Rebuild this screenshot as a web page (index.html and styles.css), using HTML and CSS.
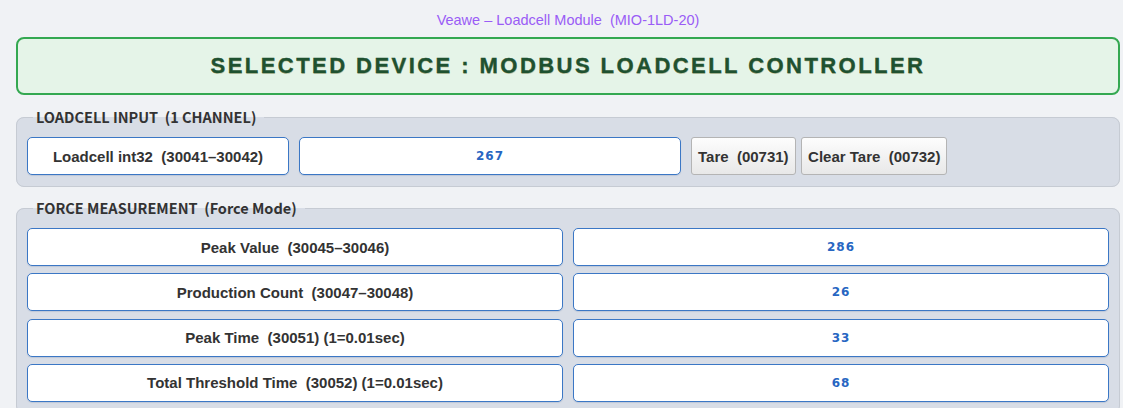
FILE: index.html
```html
<!DOCTYPE html>
<html lang="en">
<head>
<meta charset="utf-8">
<title>Veawe – Loadcell Module</title>
<link rel="stylesheet" href="styles.css">
</head>
<body>
<div class="page">
  <div class="subtitle">Veawe – Loadcell Module&nbsp; (MIO-1LD-20)</div>
  <div class="device">SELECTED DEVICE : MODBUS LOADCELL CONTROLLER</div>

  <fieldset class="group">
    <legend class="group-title">LOADCELL INPUT&nbsp; (1 CHANNEL)</legend>
    <div class="input-row">
      <div class="label-box lc-label">Loadcell int32&nbsp; (30041–30042)</div>
      <div class="value-box lc-value">267</div>
      <button class="btn">Tare&nbsp; (00731)</button>
      <button class="btn">Clear Tare&nbsp; (00732)</button>
    </div>
  </fieldset>

  <fieldset class="group">
    <legend class="group-title">FORCE MEASUREMENT&nbsp; (Force Mode)</legend>
    <div class="grid">
      <div class="label-box">Peak Value&nbsp; (30045–30046)</div>
      <div class="value-box">286</div>
      <div class="label-box">Production Count&nbsp; (30047–30048)</div>
      <div class="value-box">26</div>
      <div class="label-box">Peak Time&nbsp; (30051) (1=0.01sec)</div>
      <div class="value-box">33</div>
      <div class="label-box">Total Threshold Time&nbsp; (30052) (1=0.01sec)</div>
      <div class="value-box">68</div>
    </div>
  </fieldset>
</div>
</body>
</html>
```

FILE: styles.css
```css
html, body {
  margin: 0;
  padding: 0;
  background: #f0f2f5;
  font-family: "Liberation Sans", Arial, sans-serif;
  color: #333;
}

.page {
  width: 1104px;
  margin-left: 16px;
  padding-top: 12px;
}

.subtitle {
  text-align: center;
  font-size: 14.5px;
  line-height: 16px;
  color: #9a5cf6;
  margin-bottom: 9px;
}

.device {
  box-sizing: border-box;
  height: 58px;
  border: 2px solid #34a851;
  border-radius: 8px;
  background: #e5f4e8;
  text-align: center;
  font-size: 22px;
  line-height: 54px;
  font-weight: bold;
  letter-spacing: 2.45px;
  color: #1f5130;
  -webkit-text-stroke: 0.35px #1f5130;
  text-shadow: 0.5px 0.5px 0 rgba(150, 120, 30, 0.3);
}

.group {
  margin: 13px 0 0 0;
  padding: 11px 10px 11px 10px;
  border: 1px solid #c6cbd3;
  border-radius: 8px;
  background: #d8dde6;
  min-width: 0;
}

.group + .group {
  margin-top: 12px;
}

.group-title {
  margin-left: 6px;
  padding: 0 8px 0 3px;
  font-family: "Noto Sans CJK KR", "Noto Sans", sans-serif;
  font-weight: bold;
  font-size: 14.5px;
  line-height: 18px;
  color: #333;
}

.input-row {
  display: flex;
  align-items: stretch;
  gap: 10px;
}

.label-box,
.value-box {
  box-sizing: border-box;
  height: 38px;
  display: flex;
  align-items: center;
  justify-content: center;
  background: #fff;
  border: 1px solid #3b77c5;
  border-radius: 5px;
  box-shadow: 0 1px 1px rgba(40, 80, 140, 0.15);
}

.label-box {
  font-size: 15px;
  font-weight: bold;
  color: #333;
}

.value-box {
  font-family: "DejaVu Sans", Verdana, sans-serif;
  font-size: 12px;
  font-weight: bold;
  letter-spacing: 1px;
  color: #2766c2;
}

.lc-label {
  width: 262px;
}

.lc-value {
  width: 382px;
}

.btn {
  box-sizing: border-box;
  height: 38px;
  padding: 0 6px;
  border: 1px solid #b4b4b4;
  border-radius: 3px;
  background: linear-gradient(#fdfdfd, #e8e8e8);
  font-family: "Liberation Sans", Arial, sans-serif;
  font-size: 15px;
  font-weight: bold;
  color: #333;
  white-space: nowrap;
}

.btn + .btn {
  margin-left: -4.5px;
}

.grid {
  display: grid;
  grid-template-columns: 1fr 1fr;
  column-gap: 10px;
  row-gap: 7.33px;
}
```
